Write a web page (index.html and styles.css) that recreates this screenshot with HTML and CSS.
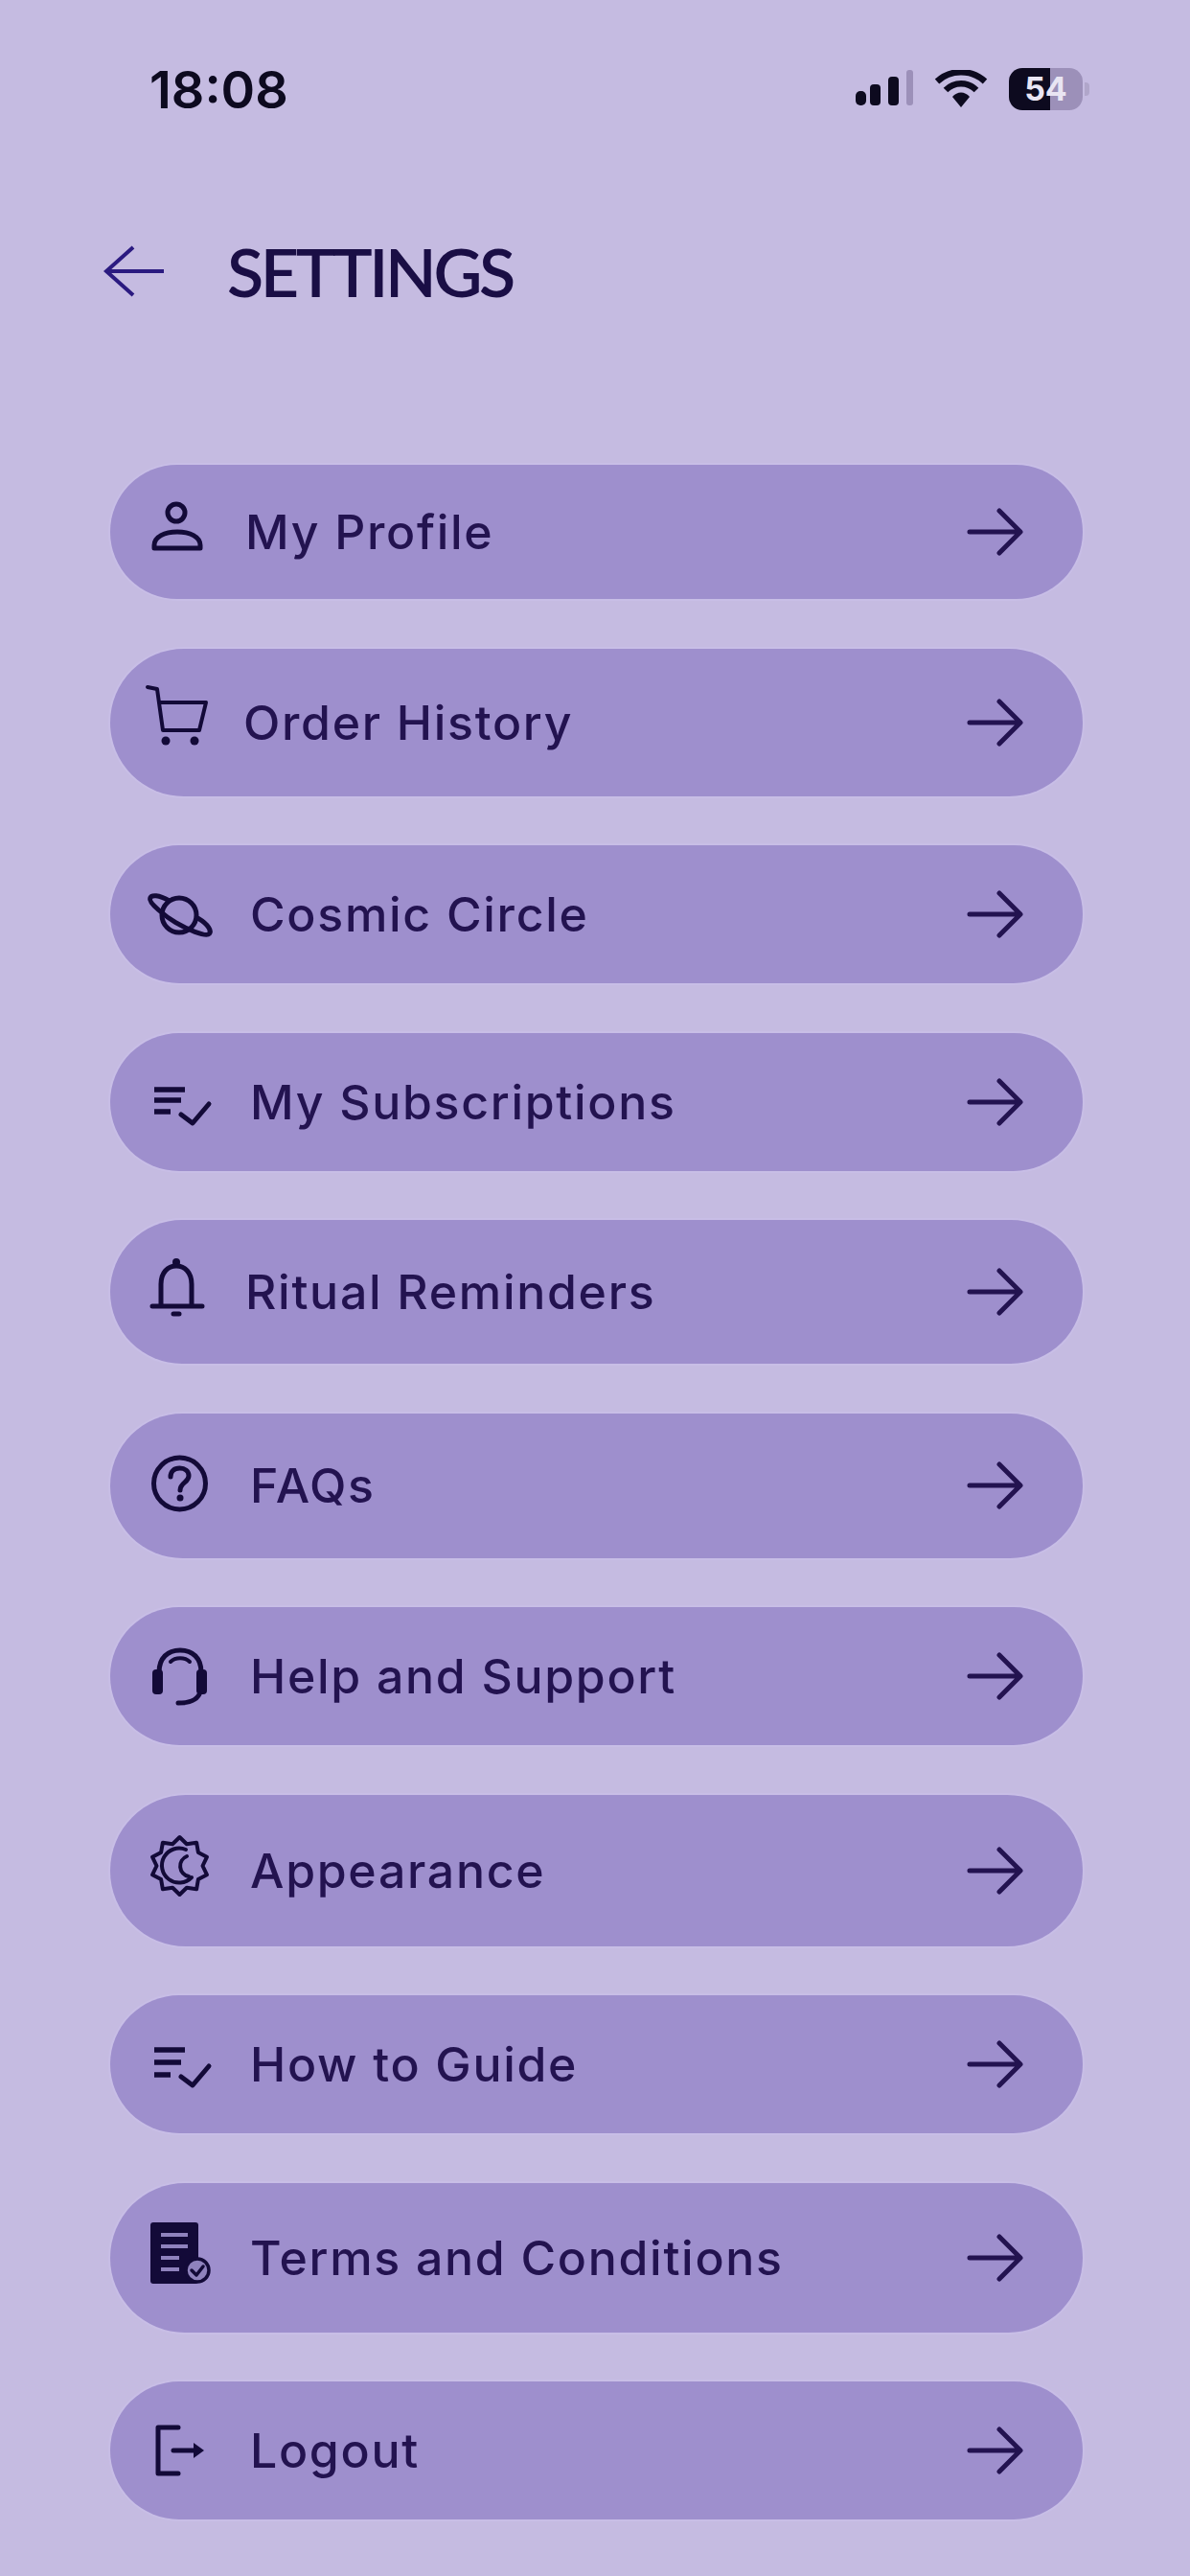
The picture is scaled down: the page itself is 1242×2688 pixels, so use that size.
FILE: index.html
```html
<!DOCTYPE html>
<html lang="en">
<head>
<meta charset="UTF-8" />
<meta name="viewport" content="width=device-width, initial-scale=1" />
<title>Settings</title>
<link rel="stylesheet" href="styles.css">
</head>

<body>

  <div class="status">
    <span class="time">18:08</span>
    <div class="status-icons">
      <svg class="signal" width="62" height="40" viewBox="0 0 62 40">
        <rect x="2" y="22" width="11" height="15" rx="5" fill="#0d0a1f"/>
        <rect x="17" y="15" width="11" height="22" rx="4" fill="#0d0a1f"/>
        <rect x="36" y="7" width="11" height="30" rx="4" fill="#0d0a1f"/>
        <rect x="55" y="0" width="7" height="37" rx="3" fill="#9c90b9"/>
      </svg>
      <svg class="wifi" width="56" height="40" viewBox="0 0 56 40">
        <path d="M3 12 C17 -1 39 -1 53 12" fill="none" stroke="#0d0a1f" stroke-width="6.5"/>
        <path d="M12 21 C21 12 35 12 44 21" fill="none" stroke="#0d0a1f" stroke-width="6.5"/>
        <path d="M19 28 C24 22 32 22 37 28 L28 39 Z" fill="#0d0a1f"/>
      </svg>
      <div class="battery">54</div>
    </div>
  </div>

  <div class="header">
    <svg class="back" width="64" height="54" viewBox="0 0 64 54">
      <path d="M31 2 L3 27 L31 52 M3 27 H63"/>
    </svg>
    <h1 class="title">SETTINGS</h1>
  </div>

  <div class="list">

    <a class="row h140 tight-b" href="#">
      <svg class="ic" width="76" height="80" viewBox="0 0 76 80">
        <circle cx="34" cy="20" r="9"/>
        <path d="M11 57 H59 V54 C59 45 48 40 35 40 S11 45 11 54 Z"/>
      </svg>
      <span class="label">My Profile</span>
      <svg class="go" width="60" height="50" viewBox="0 0 60 50"><path d="M4 25 H56 M35 3 L57 25 L35 47"/></svg>
    </a>

    <a class="row h154 tight-a" href="#">
      <svg class="ic thin" width="76" height="80" viewBox="0 0 76 80">
        <path d="M4 3 L14 5 L20 48 H58 L65 19 H16"/>
        <circle class="dot" cx="23" cy="59" r="4.5"/>
        <circle class="dot" cx="53" cy="59" r="4.5"/>
      </svg>
      <span class="label">Order History</span>
      <svg class="go" width="60" height="50" viewBox="0 0 60 50"><path d="M4 25 H56 M35 3 L57 25 L35 47"/></svg>
    </a>

    <a class="row h144" href="#">
      <svg class="ic" width="76" height="80" viewBox="0 0 76 80">
        <circle cx="37" cy="41" r="18"/>
        <g transform="translate(38 41) rotate(31)">
          <path d="M-18 -7 C-30 -7 -37 -3 -36 1 C-35 6 -12 9 0 9 C12 9 35 6 36 1 C37 -3 30 -7 18 -7"/>
        </g>
      </svg>
      <span class="label">Cosmic Circle</span>
      <svg class="go" width="60" height="50" viewBox="0 0 60 50"><path d="M4 25 H56 M35 3 L57 25 L35 47"/></svg>
    </a>

    <a class="row h144" href="#">
      <svg class="ic" width="76" height="80" viewBox="0 0 76 80">
        <path class="flat" d="M11 27 H43 M11 38 H39 M11 50 H28"/>
        <path d="M39 53 L51 62 L68 42"/>
      </svg>
      <span class="label">My Subscriptions</span>
      <svg class="go" width="60" height="50" viewBox="0 0 60 50"><path d="M4 25 H56 M35 3 L57 25 L35 47"/></svg>
    </a>

    <a class="row h150 tight-b" href="#">
      <svg class="ic" width="76" height="80" viewBox="0 0 76 80">
        <circle class="dot" cx="34" cy="9" r="4"/>
        <path d="M18 55 V32 C18 20 25 13 34 13 S50 20 50 32 V55 M9 55 H61 M31 63 H37"/>
      </svg>
      <span class="label">Ritual Reminders</span>
      <svg class="go" width="60" height="50" viewBox="0 0 60 50"><path d="M4 25 H56 M35 3 L57 25 L35 47"/></svg>
    </a>

    <a class="row h151" href="#">
      <svg class="ic" width="76" height="80" viewBox="0 0 76 80">
        <circle cx="37.5" cy="38" r="27"/>
        <path d="M28 31 C28 25 32 22 37.5 22 S47 25 47 30 C47 37 38 37 38 45"/>
        <circle class="dot" cx="38" cy="53" r="3.5"/>
      </svg>
      <span class="label">FAQs</span>
      <svg class="go" width="60" height="50" viewBox="0 0 60 50"><path d="M4 25 H56 M35 3 L57 25 L35 47"/></svg>
    </a>

    <a class="row h144" href="#">
      <svg class="ic" width="76" height="80" viewBox="0 0 76 80">
        <path d="M16 42 V36 C16 21 25 13 38 13 S60 21 60 36 V42"/>
        <path class="thin" d="M28 25 C33 20 43 20 48 25"/>
        <rect class="dot" x="9" y="33" width="11" height="26" rx="4"/>
        <rect class="dot" x="55" y="33" width="11" height="26" rx="4"/>
        <path d="M58 59 C55 65 46 68 36 68"/>
      </svg>
      <span class="label">Help and Support</span>
      <svg class="go" width="60" height="50" viewBox="0 0 60 50"><path d="M4 25 H56 M35 3 L57 25 L35 47"/></svg>
    </a>

    <a class="row h158" href="#">
      <svg class="ic thin" width="76" height="80" viewBox="0 0 76 80">
        <path d="M37.5 5 L44.9 12.2 L55.1 10.7 L56.9 20.9 L66 25.7 L61.5 35 L66 44.3 L56.9 49.1 L55.1 59.3 L44.9 57.8 L37.5 65 L30.1 57.8 L19.9 59.3 L18.1 49.1 L9 44.3 L13.5 35 L9 25.7 L18.1 20.9 L19.9 10.7 L30.1 12.2 Z"/>
        <path d="M44 18 A18 18 0 1 0 50 47"/>
        <path d="M45 25 A11 11 0 0 0 47 46"/>
      </svg>
      <span class="label">Appearance</span>
      <svg class="go" width="60" height="50" viewBox="0 0 60 50"><path d="M4 25 H56 M35 3 L57 25 L35 47"/></svg>
    </a>

    <a class="row h144" href="#">
      <svg class="ic" width="76" height="80" viewBox="0 0 76 80">
        <path class="flat" d="M11 25 H43 M11 38 H39 M11 51 H28"/>
        <path d="M39 53 L51 62 L68 42"/>
      </svg>
      <span class="label">How to Guide</span>
      <svg class="go" width="60" height="50" viewBox="0 0 60 50"><path d="M4 25 H56 M35 3 L57 25 L35 47"/></svg>
    </a>

    <a class="row h156" href="#">
      <svg class="ic" width="76" height="80" viewBox="0 0 76 80">
        <rect class="dot" x="7" y="3" width="50" height="64" rx="3"/>
        <path class="paper" d="M18 16 H46 M18 28 H46 M18 40 H37 M18 52 H37"/>
        <circle class="badge" cx="56" cy="53" r="12"/>
        <path class="tick" d="M50 53 L55 58 L62 49"/>
      </svg>
      <span class="label">Terms and Conditions</span>
      <svg class="go" width="60" height="50" viewBox="0 0 60 50"><path d="M4 25 H56 M35 3 L57 25 L35 47"/></svg>
    </a>

    <a class="row h144" href="#">
      <svg class="ic" width="76" height="80" viewBox="0 0 76 80">
        <path d="M36 16 H15 V64 H36 M31 40 H54"/>
        <path class="dot" d="M52 32 L63 40 L52 48 Z"/>
      </svg>
      <span class="label">Logout</span>
      <svg class="go" width="60" height="50" viewBox="0 0 60 50"><path d="M4 25 H56 M35 3 L57 25 L35 47"/></svg>
    </a>

  </div>

</body>
</html>
```

FILE: styles.css
```css
body {
  margin: 0;
  height: 2688px;
  overflow: hidden;
  background: #c5bbe1;
  font-family: Inter, "Liberation Sans", sans-serif;
  color: #231350;
}

/* status bar */
.status {
  height: 186px;
  display: flex;
  align-items: center;
  justify-content: space-between;
  padding: 0 112px 0 156px;
}
.time {
  font-size: 54px;
  font-weight: 600;
  color: #0d0a1f;
}
.status-icons {
  display: flex;
  align-items: center;
  gap: 22px;
}
.battery {
  position: relative;
  width: 77px;
  height: 44px;
  border-radius: 14px;
  background: linear-gradient(90deg, #0d0a1f 56%, #9c90b9 56%);
  color: #e9e5f3;
  font-size: 34px;
  font-weight: 700;
  line-height: 44px;
  text-align: center;
}
.battery::after {
  content: "";
  position: absolute;
  left: 79px;
  top: 15px;
  width: 5px;
  height: 14px;
  border-radius: 0 4px 4px 0;
  background: #b0a6ca;
}

/* header */
.header {
  height: 194px;
  display: flex;
  align-items: center;
  gap: 65px;
  padding-left: 108px;
}
.back path {
  fill: none;
  stroke: #2b1a80;
  stroke-width: 4;
}
.title {
  margin: 0;
  font-family: Lato, sans-serif;
  font-size: 70px;
  font-weight: 600;
  letter-spacing: -3.4px;
  color: #1a0e45;
}

/* rows */
.list {
  margin: 105px 112px 0 115px;
  display: flex;
  flex-direction: column;
  gap: 51.5px;
}
.row {
  display: flex;
  align-items: center;
  padding: 0 62px 0 35px;
  border-radius: 80px;
  background: #9e8fcd;
  box-shadow: 0 0 0 2px #c8bee6;
  text-decoration: none;
  color: inherit;
}
.h140 { height: 140px; }
.h144 { height: 144px; }
.h150 { height: 150px; }
.h151 { height: 151px; }
.h154 { height: 154px; }
.h156 { height: 156px; }
.h158 { height: 158px; }

.label {
  flex: 1;
  margin-left: 35px;
  font-size: 50px;
  font-weight: 500;
  letter-spacing: 1.7px;
  white-space: nowrap;
}
.tight-a .label { margin-left: 28px; }
.tight-b .label { margin-left: 30px; }

/* icons */
.ic {
  flex: none;
  fill: none;
  stroke: #130a38;
  stroke-width: 5;
  stroke-linecap: round;
  stroke-linejoin: round;
}
.ic.thin, .ic .thin { stroke-width: 4; }
.ic .flat { stroke-linecap: butt; stroke-width: 5.5; }
.ic .dot { fill: #130a38; stroke: none; }
.ic .paper { stroke: #8f82bd; stroke-linecap: butt; stroke-width: 4; }
.ic .badge { fill: #8f82bd; stroke: #130a38; stroke-width: 3.5; }
.ic .tick { stroke-width: 3.5; }
.go {
  flex: none;
  fill: none;
  stroke: #231350;
  stroke-width: 5;
  stroke-linecap: round;
  stroke-linejoin: round;
}
```
